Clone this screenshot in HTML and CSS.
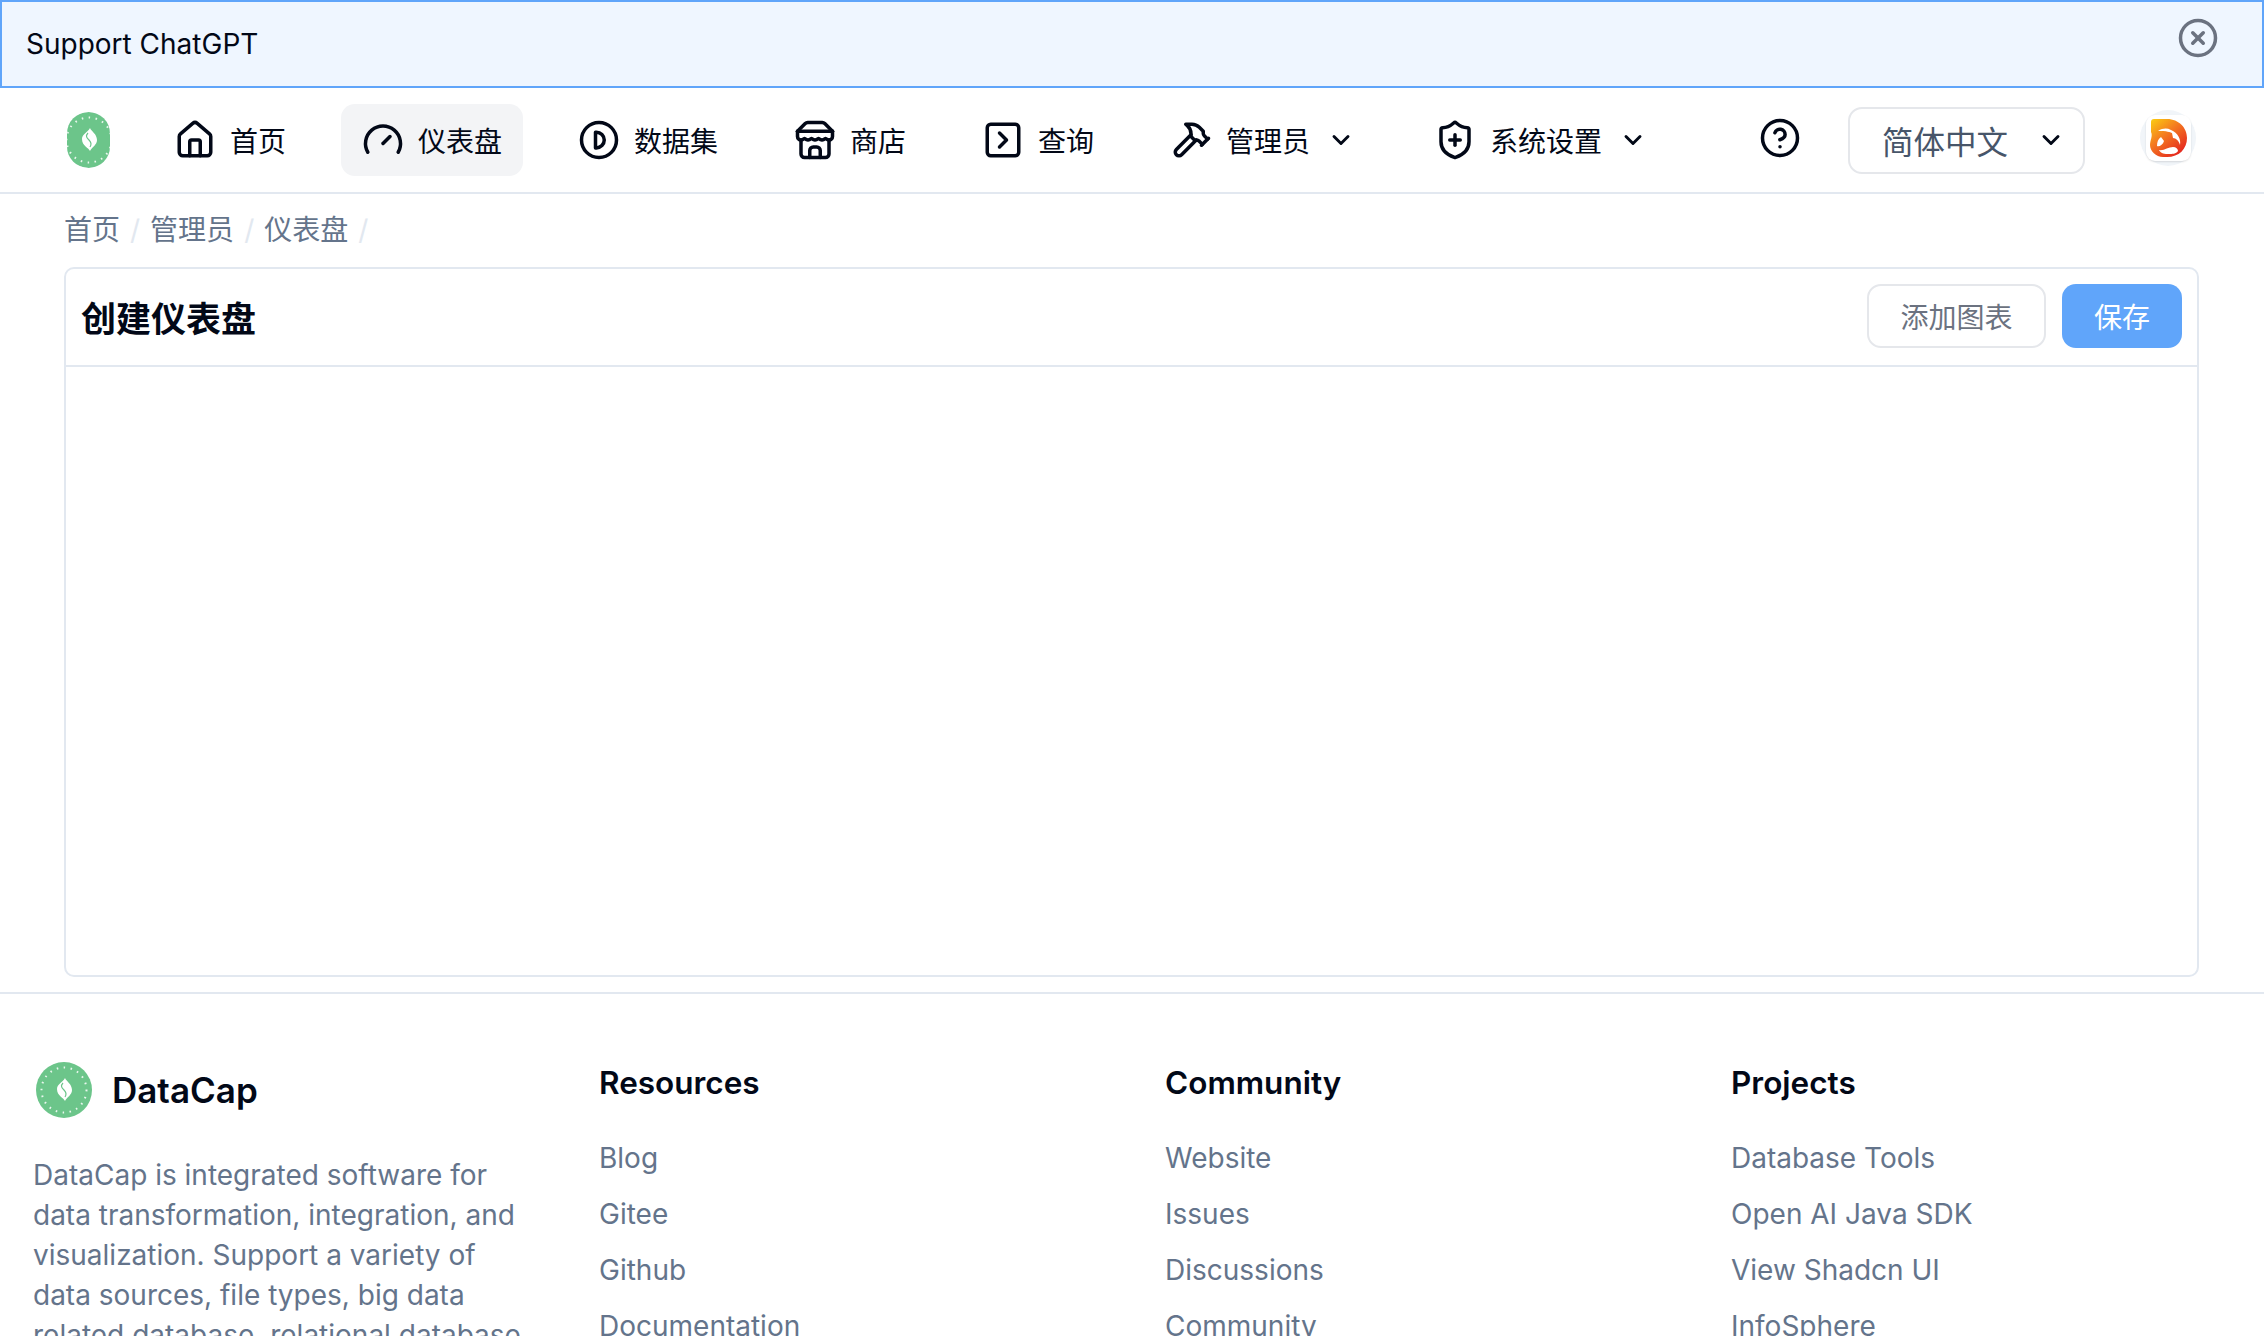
FILE: index.html
```html
<!DOCTYPE html>
<html lang="zh-CN">
<head>
    <meta charset="UTF-8">
    <meta name="viewport" content="width=device-width, initial-scale=1.0">
    <title>DataCap</title>
    <link rel="stylesheet" href="styles.css">
</head>
<body>
    <div class="alert">
        <span>Support ChatGPT</span>
        <svg class="icon alert-close" viewBox="0 0 24 24"><circle cx="12" cy="12" r="10"/><path d="m15 9-6 6"/><path d="m9 9 6 6"/></svg>
    </div>

    <nav class="navbar">
        <div class="nav-logo">
            <svg class="badge" viewBox="0 0 56 56">
                <circle cx="28" cy="28" r="28" fill="#6cc58a"/>
                <circle class="badge-ring" cx="28" cy="28" r="22.5"/>
                <path class="badge-flame" d="M29 16c1 3 7 6 7 12 0 5-5 7-7 11-1-3-8-5-8-12 0-5 6-7 8-11z"/>
                <path class="badge-vein" d="M27 21c-3 3-1 5 1 7s3 4 1 7"/>
            </svg>
        </div>

        <div class="nav-menu">
            <a class="nav-item" href="#">
                <svg class="icon" viewBox="0 0 24 24"><path d="M15 21v-8a1 1 0 0 0-1-1h-4a1 1 0 0 0-1 1v8"/><path d="M3 10a2 2 0 0 1 .709-1.528l7-5.999a2 2 0 0 1 2.582 0l7 5.999A2 2 0 0 1 21 10v9a2 2 0 0 1-2 2H5a2 2 0 0 1-2-2z"/></svg>
                首页
            </a>
            <a class="nav-item active" href="#">
                <svg class="icon" viewBox="0 0 24 24"><path d="m12 14 4-4"/><path d="M3.34 19a10 10 0 1 1 17.32 0"/></svg>
                仪表盘
            </a>
            <a class="nav-item" href="#">
                <svg class="icon" viewBox="0 0 24 24"><circle cx="12" cy="12" r="10"/><path d="M10 7.5h.5a4.5 4.5 0 0 1 0 9H10z"/></svg>
                数据集
            </a>
            <a class="nav-item" href="#">
                <svg class="icon" viewBox="0 0 24 24"><path d="m2 7 4.41-4.41A2 2 0 0 1 7.83 2h8.34a2 2 0 0 1 1.42.59L22 7"/><path d="M4 12v8a2 2 0 0 0 2 2h12a2 2 0 0 0 2-2v-8"/><path d="M15 22v-4a2 2 0 0 0-2-2h-2a2 2 0 0 0-2 2v4"/><path d="M2 7h20"/><path d="M22 7v3a2 2 0 0 1-2 2 2.7 2.7 0 0 1-1.59-.63.7.7 0 0 0-.82 0A2.7 2.7 0 0 1 16 12a2.7 2.7 0 0 1-1.59-.63.7.7 0 0 0-.82 0A2.7 2.7 0 0 1 12 12a2.7 2.7 0 0 1-1.59-.63.7.7 0 0 0-.82 0A2.7 2.7 0 0 1 8 12a2.7 2.7 0 0 1-1.59-.63.7.7 0 0 0-.82 0A2.7 2.7 0 0 1 4 12a2 2 0 0 1-2-2V7"/></svg>
                商店
            </a>
            <a class="nav-item" href="#">
                <svg class="icon" viewBox="0 0 24 24"><rect x="3" y="3" width="18" height="18" rx="2"/><path d="m10 8 4 4-4 4"/></svg>
                查询
            </a>
            <a class="nav-item dropdown" href="#">
                <svg class="icon" viewBox="0 0 24 24"><path d="m15 12-8.373 8.373a1 1 0 1 1-3-3L12 9"/><path d="m18 15 4-4"/><path d="m21.5 11.5-1.914-1.914A2 2 0 0 1 19 8.172V7l-2.26-2.26a6 6 0 0 0-4.202-1.756L9 2.96l.92.82A6.18 6.18 0 0 1 12 8.4V10l2 2h1.172a2 2 0 0 1 1.414.586L18.5 14.5"/></svg>
                管理员
                <svg class="icon chevron" viewBox="0 0 24 24"><path d="m6 9 6 6 6-6"/></svg>
            </a>
            <a class="nav-item dropdown" href="#">
                <svg class="icon" viewBox="0 0 24 24"><path d="M20 13c0 5-3.5 7.5-7.66 8.95a1 1 0 0 1-.67-.01C7.5 20.5 4 18 4 13V6a1 1 0 0 1 1-1c2 0 4.5-1.2 6.24-2.72a1.17 1.17 0 0 1 1.52 0C14.51 3.81 17 5 19 5a1 1 0 0 1 1 1z"/><path d="M9 12h6"/><path d="M12 9v6"/></svg>
                系统设置
                <svg class="icon chevron" viewBox="0 0 24 24"><path d="m6 9 6 6 6-6"/></svg>
            </a>
        </div>

        <div class="nav-right">
            <svg class="icon help" viewBox="0 0 24 24"><circle cx="12" cy="12" r="10"/><path d="M9.09 9a3 3 0 0 1 5.83 1c0 2-3 3-3 3"/><path d="M12 17h.01"/></svg>
            <div class="lang-select">
                简体中文
                <svg class="icon chevron" viewBox="0 0 24 24"><path d="m6 9 6 6 6-6"/></svg>
            </div>
            <div class="user-avatar">
                <div class="user-logo">
                    <svg viewBox="0 0 37 38">
                        <defs>
                            <linearGradient id="fox" x1="0" y1="0" x2="0.8" y2="1">
                                <stop offset="0" stop-color="#fbd010"/>
                                <stop offset="0.45" stop-color="#f47a20"/>
                                <stop offset="1" stop-color="#e3201f"/>
                            </linearGradient>
                        </defs>
                        <path fill="url(#fox)" d="M1 3a3 3 0 0 1 3-3h13c12 0 20 9 20 19 0 11-8 19-20 19h-4C6 38 0 32 0 26c0-5 3-9 1-13z"/>
                        <path fill="#fff" d="M8 12c5-3 9-3 13-1 7 3 10 9 9 15-1-4-4-7-7-7l-1-5c-2-1-5-2-14-2z"/>
                        <path fill="#fff" d="M11 18l3 4c-1 4-5 6-7 5 0-4 1-7 4-9zM9 31c5 1 9-3 14-3 3 0 5 2 5 4-2 3-6 3-9 3-4 0-8 0-10-4z"/>
                    </svg>
                </div>
            </div>
        </div>
    </nav>

    <main class="page">
        <div class="breadcrumb">
            <a href="#">首页</a><span class="sep">/</span>
            <a href="#">管理员</a><span class="sep">/</span>
            <a href="#">仪表盘</a><span class="sep">/</span>
        </div>

        <section class="card">
            <div class="card-header">
                <h3>创建仪表盘</h3>
                <div class="card-actions">
                    <button class="btn btn-outline">添加图表</button>
                    <button class="btn btn-primary">保存</button>
                </div>
            </div>
            <div class="card-body"></div>
        </section>
    </main>

    <footer class="footer">
        <div class="footer-brand">
            <div class="brand-row">
                <svg class="badge brand-badge" viewBox="0 0 56 56">
                    <circle cx="28" cy="28" r="28" fill="#6cc58a"/>
                    <circle class="badge-ring" cx="28" cy="28" r="22.5"/>
                    <path class="badge-flame" d="M29 16c1 3 7 6 7 12 0 5-5 7-7 11-1-3-8-5-8-12 0-5 6-7 8-11z"/>
                    <path class="badge-vein" d="M27 21c-3 3-1 5 1 7s3 4 1 7"/>
                </svg>
                <span class="brand-name">DataCap</span>
            </div>
            <p>DataCap is integrated software for data transformation, integration, and visualization. Support a variety of data sources, file types, big data related database, relational database, NoSQL database, etc.</p>
        </div>
        <div class="footer-col">
            <h4>Resources</h4>
            <a href="#">Blog</a>
            <a href="#">Gitee</a>
            <a href="#">Github</a>
            <a href="#">Documentation</a>
        </div>
        <div class="footer-col">
            <h4>Community</h4>
            <a href="#">Website</a>
            <a href="#">Issues</a>
            <a href="#">Discussions</a>
            <a href="#">Community</a>
        </div>
        <div class="footer-col">
            <h4>Projects</h4>
            <a href="#">Database Tools</a>
            <a href="#">Open AI Java SDK</a>
            <a href="#">View Shadcn UI</a>
            <a href="#">InfoSphere</a>
        </div>
    </footer>
</body>
</html>
```

FILE: styles.css
```css
html, body {
    height: 1336px;
    overflow: hidden;
}

body {
    margin: 0;
    font-family: Inter, "Noto Sans CJK SC", sans-serif;
    font-size: 28px;
    color: #020817;
    background: white;
}

a {
    color: inherit;
    text-decoration: none;
}

.icon {
    width: 42px;
    height: 42px;
    flex-shrink: 0;
    fill: none;
    stroke: currentColor;
    stroke-width: 2;
    stroke-linecap: round;
    stroke-linejoin: round;
}

.chevron {
    width: 28px;
    height: 28px;
    stroke-width: 2.5;
}

/* top alert */
.alert {
    position: relative;
    box-sizing: border-box;
    height: 88px;
    padding-left: 24px;
    display: flex;
    align-items: center;
    border: 2px solid #60a5fa;
    background: #eff6ff;
}

.alert-close {
    position: absolute;
    top: 15px;
    right: 43px;
    color: #6b7280;
}

/* navbar */
.navbar {
    box-sizing: border-box;
    height: 106px;
    padding: 0 68px 0 67px;
    display: flex;
    align-items: center;
    border-bottom: 2px solid #e2e8f0;
}

.nav-logo {
    width: 43px;
    height: 56px;
    flex-shrink: 0;
    margin-right: 43px;
    border-radius: 22px;
    overflow: hidden;
    background: #f1f5f9;
    display: flex;
    justify-content: center;
}

.badge {
    width: 56px;
    height: 56px;
    flex-shrink: 0;
}

.badge-ring {
    fill: none;
    stroke: white;
    stroke-width: 2;
    stroke-dasharray: 1.5 5.5;
    opacity: 0.85;
}

.badge-flame {
    fill: white;
}

.badge-vein {
    fill: none;
    stroke: #6cc58a;
    stroke-width: 1.2;
}

.nav-menu {
    display: flex;
    align-items: center;
    gap: 34px;
}

.nav-item {
    height: 72px;
    padding: 0 21px;
    display: flex;
    align-items: center;
    border-radius: 14px;
    white-space: nowrap;
}

.nav-item .icon:first-child {
    margin-right: 14px;
}

.nav-item.active {
    background: #f3f4f6;
}

.nav-item.dropdown {
    padding-right: 24px;
}

.nav-item .chevron {
    margin-left: 17px;
}

.nav-right {
    margin-left: auto;
    display: flex;
    align-items: center;
}

.help {
    margin-top: -4px;
    margin-right: 47px;
}

.lang-select {
    box-sizing: border-box;
    width: 237px;
    height: 67px;
    padding: 0 18px 0 32px;
    display: flex;
    align-items: center;
    justify-content: space-between;
    border: 2px solid #e5e7eb;
    border-radius: 14px;
    font-size: 31.5px;
    color: #475569;
}

.lang-select .chevron {
    color: #020817;
}

.user-avatar {
    width: 56px;
    height: 56px;
    margin-left: 55px;
    margin-top: -4px;
    border-radius: 50%;
    background: #f1f5f9;
    display: flex;
    align-items: center;
    justify-content: center;
}

.user-logo {
    box-sizing: border-box;
    width: 45px;
    height: 46px;
    padding: 4px;
    border-radius: 9px;
    background: white;
    box-shadow: 0 1px 2px rgba(0, 0, 0, 0.12);
}

.user-logo svg {
    display: block;
    width: 100%;
    height: 100%;
}

/* main */
.page {
    padding: 0 65px 0 64px;
}

.breadcrumb {
    height: 42px;
    padding: 15px 0 16px;
    display: flex;
    align-items: center;
    line-height: 42px;
    color: #64748b;
}

.sep {
    margin: 0 10px;
    color: #e2e8f0;
}

.card {
    box-sizing: border-box;
    height: 710px;
    border: 2px solid #e2e8f0;
    border-radius: 10px;
}

.card-header {
    padding: 15px 15px 17px;
    display: flex;
    align-items: center;
    justify-content: space-between;
    border-bottom: 2px solid #e2e8f0;
}

.card-header h3 {
    margin: 0;
    font-size: 35px;
    font-weight: 700;
}

.card-actions {
    display: flex;
    gap: 16px;
}

.btn {
    box-sizing: border-box;
    height: 64px;
    border-radius: 14px;
    font-family: inherit;
    font-size: 28px;
    cursor: pointer;
}

.btn-outline {
    width: 179px;
    border: 2px solid #e5e7eb;
    background: white;
    color: #6b7280;
}

.btn-primary {
    width: 120px;
    border: none;
    background: #60a5fa;
    color: white;
}

/* footer */
.footer {
    margin-top: 15px;
    padding: 68px 33px 0;
    display: grid;
    grid-template-columns: repeat(4, 500px);
    gap: 66px;
    border-top: 2px solid #e2e8f0;
}

.brand-row {
    margin-left: 3px;
    display: flex;
    align-items: center;
    gap: 20px;
}

.brand-name {
    font-size: 35px;
    font-weight: 600;
}

.footer-brand p {
    margin: 37px 0 0;
    line-height: 40px;
    color: #64748b;
}

.footer-col {
    display: flex;
    flex-direction: column;
    align-items: flex-start;
    gap: 14px;
    color: #64748b;
}

.footer-col h4 {
    margin: 0 0 19px;
    font-size: 31.5px;
    font-weight: 600;
    line-height: 42px;
    color: #020817;
}

.footer-col a {
    line-height: 42px;
}
```
